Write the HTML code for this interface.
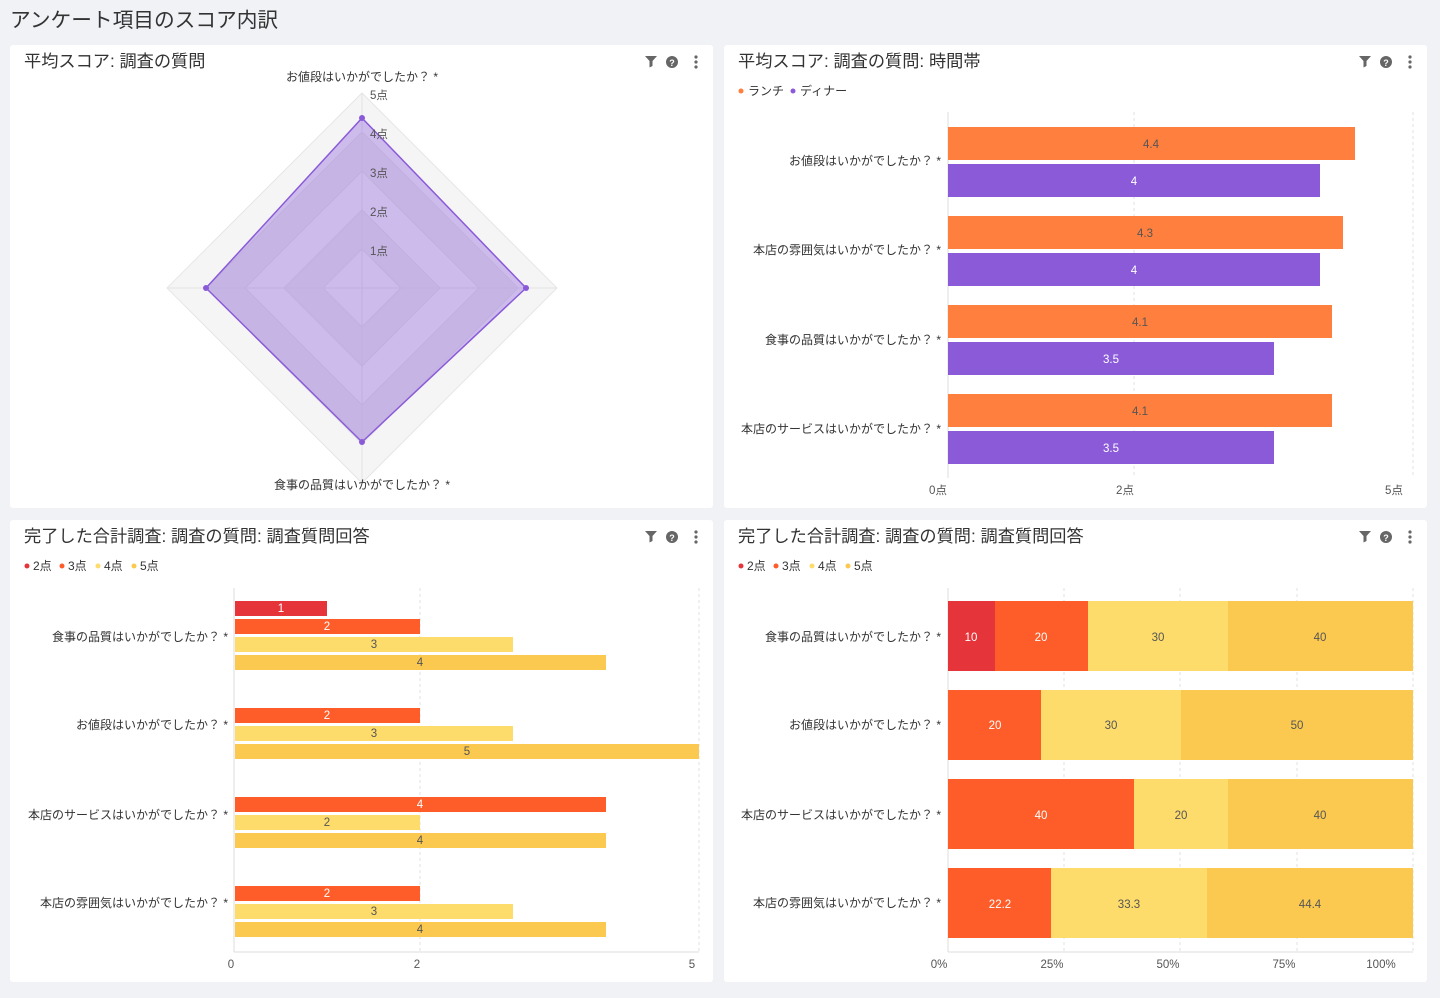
<!DOCTYPE html>
<html><head><meta charset="utf-8"><style>
body{margin:0;background:#f1f2f6;}
svg{display:block;font-family:"Liberation Sans","Noto Sans CJK JP",sans-serif;}
</style></head><body>
<svg width="1440" height="998" viewBox="0 0 1440 998" xmlns="http://www.w3.org/2000/svg">
<rect width="1440" height="998" fill="#f1f2f6"/>
<text x="10" y="27" font-size="20.7" fill="#333">アンケート項目のスコア内訳</text>
<g fill="#fff">
<rect x="10" y="45" width="703" height="463" rx="3"/>
<rect x="724" y="45" width="703" height="463" rx="3"/>
<rect x="10" y="520" width="703" height="462" rx="3"/>
<rect x="724" y="520" width="703" height="462" rx="3"/>
</g>
<g font-size="17.2" fill="#333">
<text x="24" y="67">平均スコア: 調査の質問</text>
<text x="738" y="67">平均スコア: 調査の質問: 時間帯</text>
<text x="24" y="542">完了した合計調査: 調査の質問: 調査質問回答</text>
<text x="738" y="542">完了した合計調査: 調査の質問: 調査質問回答</text>
</g>
<g id="ic" fill="#666">
<path d="M645 56h12l-4.5 5v5l-3 1.5v-6.5z"/>
<circle cx="672" cy="62" r="6"/>
<text x="672" y="66" font-size="9" font-weight="bold" fill="#fff" text-anchor="middle">?</text>
<circle cx="696" cy="57" r="1.6"/><circle cx="696" cy="62" r="1.6"/><circle cx="696" cy="67" r="1.6"/>
</g>
<use href="#ic" x="714"/><use href="#ic" y="475"/><use href="#ic" x="714" y="475"/>

<g transform="translate(362,288)">
<polygon points="0,-195 195,0 0,195 -195,0" fill="#f5f5f5" stroke="#e6e6e6"/>
<polygon points="0,-156 156,0 0,156 -156,0" fill="#ebebeb" stroke="#e2e2e2"/>
<polygon points="0,-117 117,0 0,117 -117,0" fill="#f5f5f5" stroke="#e2e2e2"/>
<polygon points="0,-78 78,0 0,78 -78,0" fill="#ebebeb" stroke="#e2e2e2"/>
<polygon points="0,-39 39,0 0,39 -39,0" fill="#f5f5f5" stroke="#e2e2e2"/>
<line x1="0" y1="-195" x2="0" y2="195" stroke="#e2e2e2"/>
<line x1="-195" y1="0" x2="195" y2="0" stroke="#e2e2e2"/>
<polygon points="0,-170 164,0 0,154 -156,0" fill="rgba(139,92,220,0.38)" stroke="#8a5ad8" stroke-width="1.5"/>
<g fill="#8a5ad8"><circle cx="0" cy="-170" r="3"/><circle cx="164" cy="0" r="3"/><circle cx="0" cy="154" r="3"/><circle cx="-156" cy="0" r="3"/></g>
<g font-size="11.5" fill="#555">
<text x="8" y="-189">5点</text><text x="8" y="-150">4点</text><text x="8" y="-111">3点</text><text x="8" y="-72">2点</text><text x="8" y="-33">1点</text>
</g>
</g>
<g font-size="12" fill="#333" text-anchor="middle">
<text x="362" y="81">お値段はいかがでしたか？ *</text>
<text x="362" y="489">食事の品質はいかがでしたか？ *</text>
</g>

<g font-size="12" fill="#333">
<circle cx="741" cy="91" r="2.5" fill="#fe7f3e"/><text x="748" y="95">ランチ</text>
<circle cx="793" cy="91" r="2.5" fill="#8a5ad8"/><text x="800" y="95">ディナー</text>
</g>
<g stroke="#e0e0e0" stroke-dasharray="3,3"><line x1="1134" y1="112" x2="1134" y2="478"/><line x1="1413" y1="112" x2="1413" y2="478"/></g>
<line x1="948" y1="112" x2="948" y2="478" stroke="#ddd"/>
<g fill="#fe7f3e"><rect x="948" y="127" width="407" height="33"/><rect x="948" y="216" width="395" height="33"/><rect x="948" y="305" width="384" height="33"/><rect x="948" y="394" width="384" height="33"/></g>
<g fill="#8a5ad8"><rect x="948" y="164" width="372" height="33"/><rect x="948" y="253" width="372" height="33"/><rect x="948" y="342" width="326" height="33"/><rect x="948" y="431" width="326" height="33"/></g>
<g font-size="11.5" text-anchor="middle">
<g fill="#555"><text x="1151" y="148">4.4</text><text x="1145" y="237">4.3</text><text x="1140" y="326">4.1</text><text x="1140" y="415">4.1</text></g>
<g fill="#fff"><text x="1134" y="185">4</text><text x="1134" y="274">4</text><text x="1111" y="363">3.5</text><text x="1111" y="452">3.5</text></g>
</g>
<g font-size="12" fill="#333" text-anchor="end">
<text x="941" y="165">お値段はいかがでしたか？ *</text>
<text x="941" y="254">本店の雰囲気はいかがでしたか？ *</text>
<text x="941" y="344">食事の品質はいかがでしたか？ *</text>
<text x="941" y="433">本店のサービスはいかがでしたか？ *</text>
</g>
<g font-size="11.5" fill="#555" text-anchor="middle"><text x="938" y="494">0点</text><text x="1125" y="494">2点</text><text x="1394" y="494">5点</text></g>

<g id="lg" font-size="12" fill="#333">
<circle cx="27" cy="566" r="2.5" fill="#e5343a"/><text x="33" y="570">2点</text>
<circle cx="62" cy="566" r="2.5" fill="#fe5d2a"/><text x="68" y="570">3点</text>
<circle cx="98" cy="566" r="2.5" fill="#fddc6b"/><text x="104" y="570">4点</text>
<circle cx="134" cy="566" r="2.5" fill="#fbc94f"/><text x="140" y="570">5点</text>
</g>
<use href="#lg" x="714"/>

<g stroke="#e0e0e0" stroke-dasharray="3,3"><line x1="420" y1="588" x2="420" y2="952"/><line x1="699" y1="588" x2="699" y2="952"/></g>
<line x1="234" y1="588" x2="234" y2="952" stroke="#ddd"/>
<line x1="234" y1="952" x2="699" y2="952" stroke="#ddd"/>
<g>
<rect x="235" y="601" width="92" height="15" fill="#e5343a"/>
<rect x="235" y="619" width="185" height="15" fill="#fe5d2a"/>
<rect x="235" y="637" width="278" height="15" fill="#fddc6b"/>
<rect x="235" y="655" width="371" height="15" fill="#fbc94f"/>
<rect x="235" y="708" width="185" height="15" fill="#fe5d2a"/>
<rect x="235" y="726" width="278" height="15" fill="#fddc6b"/>
<rect x="235" y="744" width="464" height="15" fill="#fbc94f"/>
<rect x="235" y="797" width="371" height="15" fill="#fe5d2a"/>
<rect x="235" y="815" width="185" height="15" fill="#fddc6b"/>
<rect x="235" y="833" width="371" height="15" fill="#fbc94f"/>
<rect x="235" y="886" width="185" height="15" fill="#fe5d2a"/>
<rect x="235" y="904" width="278" height="15" fill="#fddc6b"/>
<rect x="235" y="922" width="371" height="15" fill="#fbc94f"/>
</g>
<g font-size="11.5" text-anchor="middle">
<g fill="#fff"><text x="281" y="612">1</text><text x="327" y="630">2</text><text x="327" y="719">2</text><text x="420" y="808">4</text><text x="327" y="897">2</text></g>
<g fill="#555"><text x="374" y="648">3</text><text x="420" y="666">4</text><text x="374" y="737">3</text><text x="467" y="755">5</text><text x="327" y="826">2</text><text x="420" y="844">4</text><text x="374" y="915">3</text><text x="420" y="933">4</text></g>
</g>
<g font-size="12" fill="#333" text-anchor="end">
<text x="228" y="641">食事の品質はいかがでしたか？ *</text>
<text x="228" y="729">お値段はいかがでしたか？ *</text>
<text x="228" y="819">本店のサービスはいかがでしたか？ *</text>
<text x="228" y="907">本店の雰囲気はいかがでしたか？ *</text>
</g>
<g font-size="11.5" fill="#555" text-anchor="middle"><text x="231" y="968">0</text><text x="417" y="968">2</text><text x="692" y="968">5</text></g>

<g stroke="#e0e0e0" stroke-dasharray="3,3"><line x1="1064" y1="588" x2="1064" y2="952"/><line x1="1180" y1="588" x2="1180" y2="952"/><line x1="1297" y1="588" x2="1297" y2="952"/><line x1="1413" y1="588" x2="1413" y2="952"/></g>
<line x1="948" y1="588" x2="948" y2="952" stroke="#ddd"/>
<line x1="948" y1="952" x2="1413" y2="952" stroke="#ddd"/>
<g>
<rect x="948" y="601" width="47" height="70" fill="#e5343a"/>
<rect x="995" y="601" width="93" height="70" fill="#fe5d2a"/>
<rect x="1088" y="601" width="140" height="70" fill="#fddc6b"/>
<rect x="1228" y="601" width="185" height="70" fill="#fbc94f"/>
<rect x="948" y="690" width="93" height="70" fill="#fe5d2a"/>
<rect x="1041" y="690" width="140" height="70" fill="#fddc6b"/>
<rect x="1181" y="690" width="232" height="70" fill="#fbc94f"/>
<rect x="948" y="779" width="186" height="70" fill="#fe5d2a"/>
<rect x="1134" y="779" width="94" height="70" fill="#fddc6b"/>
<rect x="1228" y="779" width="185" height="70" fill="#fbc94f"/>
<rect x="948" y="868" width="103" height="70" fill="#fe5d2a"/>
<rect x="1051" y="868" width="156" height="70" fill="#fddc6b"/>
<rect x="1207" y="868" width="206" height="70" fill="#fbc94f"/>
</g>
<g font-size="11.5" text-anchor="middle">
<g fill="#fff"><text x="971" y="641">10</text><text x="1041" y="641">20</text><text x="995" y="729">20</text><text x="1041" y="819">40</text><text x="1000" y="908">22.2</text></g>
<g fill="#555"><text x="1158" y="641">30</text><text x="1320" y="641">40</text><text x="1111" y="729">30</text><text x="1297" y="729">50</text><text x="1181" y="819">20</text><text x="1320" y="819">40</text><text x="1129" y="908">33.3</text><text x="1310" y="908">44.4</text></g>
</g>
<g font-size="12" fill="#333" text-anchor="end">
<text x="941" y="641">食事の品質はいかがでしたか？ *</text>
<text x="941" y="729">お値段はいかがでしたか？ *</text>
<text x="941" y="819">本店のサービスはいかがでしたか？ *</text>
<text x="941" y="907">本店の雰囲気はいかがでしたか？ *</text>
</g>
<g font-size="11.5" fill="#555" text-anchor="middle"><text x="939" y="968">0%</text><text x="1052" y="968">25%</text><text x="1168" y="968">50%</text><text x="1284" y="968">75%</text><text x="1381" y="968">100%</text></g>
</svg>
</body></html>
